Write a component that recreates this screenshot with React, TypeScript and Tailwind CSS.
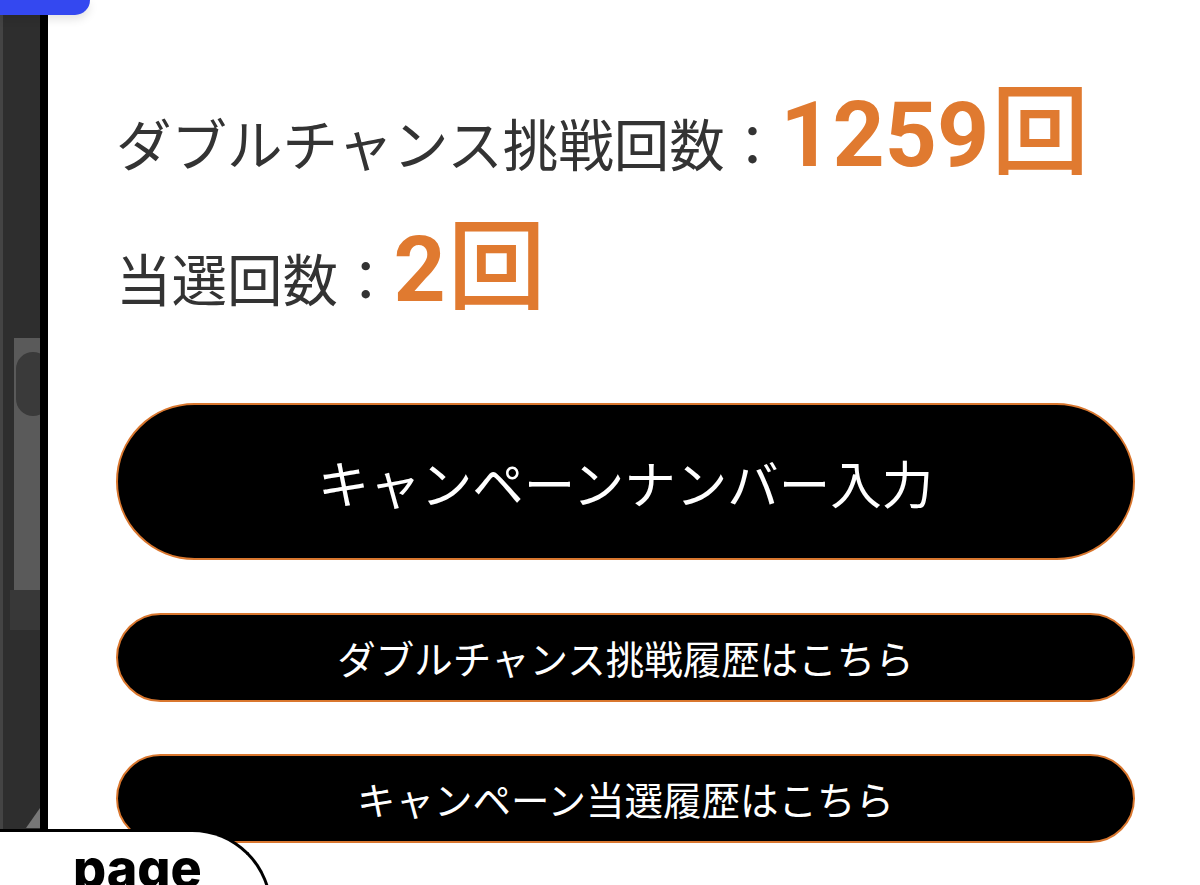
// Double-chance stats panel with action buttons

const jp = { fontFamily: '"Noto Sans CJK JP", "Noto Sans", sans-serif' }

function StatLine({ label, value, className }: { label: string; value: string; className?: string }) {
  return (
    <div className={`flex items-baseline h-[88px] ${className ?? ''}`}>
      <span className="text-[55.5px] leading-none text-[#333333]" style={jp}>
        {label}：
      </span>
      <span
        className="text-[91px] leading-none font-bold text-[#e07a30]"
        style={{ fontFamily: 'Roboto, sans-serif' }}
      >
        {value}
      </span>
      <span className="text-[98px] leading-none font-medium text-[#e07a30] ml-[2px]" style={jp}>
        回
      </span>
    </div>
  )
}

function PillButton({ children, big }: { children: string; big?: boolean }) {
  return (
    <button
      className={`w-full rounded-full bg-black border-2 border-[#d9772f] text-white flex items-center justify-center ${
        big ? 'h-[157px] text-[51.5px]' : 'h-[89px] text-[38.5px]'
      }`}
      style={jp}
    >
      {children}
    </button>
  )
}

export default function App() {
  return (
    <div className="relative w-[1200px] h-[885px] overflow-hidden bg-white flex">
      {/* left photo strip */}
      <div className="relative w-[40px] h-full bg-[#2e2e2e] overflow-hidden">
        <div className="absolute left-0 top-0 w-[3px] h-full bg-[#444444]" />
        <div className="absolute left-[14px] top-[338px] w-[26px] h-[258px] bg-[#5a5a5a]" />
        <div className="absolute left-[16px] top-[352px] w-[34px] h-[64px] rounded-full bg-[#3a3a3a]" />
        <div className="absolute left-[10px] top-[590px] w-[30px] h-[40px] bg-[#383838]" />
        <div className="absolute left-[26px] top-[808px] w-[14px] h-[20px] bg-[#777777] [clip-path:polygon(100%_0,100%_100%,0_100%)]" />
      </div>
      <div className="w-[8px] h-full bg-black" />

      {/* main content */}
      <div className="flex-1 pl-[68px] pr-[65px] pt-[74px]">
        <StatLine label="ダブルチャンス挑戦回数" value="1259" />
        <StatLine label="当選回数" value="2" className="mt-[47px]" />

        <div className="mt-[106px]">
          <PillButton big>キャンペーンナンバー入力</PillButton>
        </div>
        <div className="mt-[53px]">
          <PillButton>ダブルチャンス挑戦履歴はこちら</PillButton>
        </div>
        <div className="mt-[52px]">
          <PillButton>キャンペーン当選履歴はこちら</PillButton>
        </div>
      </div>

      {/* blue header corner */}
      <div className="absolute left-0 top-0 w-[90px] h-[15px] bg-[#3448f0] rounded-br-[28px] shadow-[0_4px_10px_rgba(0,0,0,0.12)]" />

      {/* page tab */}
      <div className="absolute left-0 top-[829px] w-[272px] h-[120px] bg-white border-t-[3px] border-r-[3px] border-black rounded-tr-[80px] pl-[73px] pt-[11px]">
        <span
          className="text-[52px] leading-none font-extrabold text-black"
          style={{ fontFamily: 'Inter, "Liberation Sans", sans-serif' }}
        >
          page
        </span>
      </div>
    </div>
  )
}
